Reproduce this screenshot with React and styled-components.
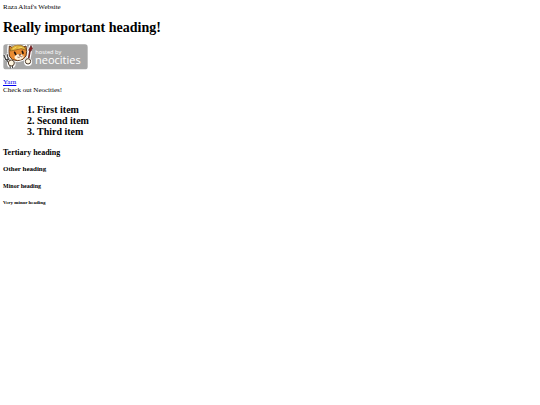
import styled, { createGlobalStyle } from "styled-components";

const GlobalStyle = createGlobalStyle`
body {
margin: 0;
background: #fff;
color: #000;
font-family: "Liberation Serif", "Times New Roman", serif;
font-size: 7px;
line-height: 8px;
}
`
const Page = styled.main`
padding: 3px;
`
const Title = styled.h1`
margin: 9px 0 8px;
font-size: 14px;
line-height: 16px;
`
const BadgeLink = styled.a`
display: block;
width: 85px;
height: 26px;
margin-bottom: 8px;
`
const Badge = styled.svg`
display: block;
width: 100%;
height: 100%;
`
const BadgeText = styled.text`
font-family: "Open Sans", sans-serif;
font-size: 33px;
fill: #fff;
`
const TextLink = styled.a`
color: #0000ee;
text-decoration: underline;
`
const Text = styled.div`
`
const List = styled.ol`
margin: 10px 0 11px;
padding-left: 34px;
font-size: 10px;
font-weight: bold;
line-height: 11px;
`
const Tertiary = styled.h3`
margin: 0 0 8px;
font-size: 8px;
line-height: 9px;
`
const Other = styled.h4`
margin: 0 0 10px;
font-size: 7px;
line-height: 8px;
`
const Minor = styled.h5`
margin: 0 0 11px;
font-size: 6px;
line-height: 6px;
`
const VeryMinor = styled.h6`
margin: 0;
font-size: 5px;
line-height: 6px;
`

const NeocitiesBadge = () => {
    return (
        <Badge viewBox="0 0 255 78" role="img" aria-label="Hosted by Neocities">
            <rect x="1" y="1" width="253" height="75" rx="8" fill="#a7a7a7" />
            {/* fork */}
            <path d="M4 34l6 13 8 4M5 44l6 4M13 31l1 15M11 45l6 13" fill="none" stroke="#fff" strokeWidth="6" strokeLinecap="round" />
            <path d="M3 34l5 12 7 1M13 32l3 15M10 47l9 13" fill="none" stroke="#444" strokeWidth="4" strokeLinecap="round" />
            {/* brush */}
            <path d="M83 8l-5 30-4 16" fill="none" stroke="#fff" strokeWidth="12" strokeLinecap="round" />
            <path d="M84 4l4 9-4 9-7-3z" fill="#8f1d20" stroke="#552222" strokeWidth="2" />
            <path d="M81 20l-5 29" stroke="#6f2927" strokeWidth="5" strokeLinecap="round" />
            {/* head */}
            <path d="M14 20L15 3l13 5Q42-2 57 7l13-5 3 16-1 19-11 12-16 4-18-3-10-12z" fill="#fff" stroke="#fff" strokeWidth="3" strokeLinejoin="round" />
            <path d="M18 22L19 6l12 6 26-1 12-5 2 16-2 14-9 10-16 4-16-3-9-11z" fill="#e98b32" stroke="#59351c" strokeWidth="3" strokeLinejoin="round" />
            <path d="M34 38l9-7 11-1 8 6-1 6-8 5-10 1-7-4z" fill="#fff2dc" />
            <path d="M22 21Q24 4 44 3q21 0 26 16L54 14l-16 4z" fill="#dfb23b" stroke="#80571f" strokeWidth="2" />
            <path d="M30 15l10-6M46 12l12-2" stroke="#f6d86b" strokeWidth="3" />
            <path d="M35 25l3 6M58 22l2 6" stroke="#23150f" strokeWidth="5" strokeLinecap="round" />
            <path d="M47 32l7-1-3 4z" fill="#4d211a" stroke="#4d211a" />
            <path d="M43 39q6 4 9-2 4 3 7-1" fill="none" stroke="#6c3320" strokeWidth="2" />
            {/* paws */}
            <circle cx="25" cy="60" r="13" fill="#fff" />
            <circle cx="25" cy="57" r="9" fill="#fff5df" stroke="#4d3a2b" strokeWidth="3" />
            <path d="M21 66l1 7M28 66l1 6" stroke="#333" strokeWidth="3" />
            <circle cx="75" cy="54" r="12" fill="#fff" />
            <circle cx="75" cy="52" r="8" fill="#fff5df" stroke="#4d3a2b" strokeWidth="3" />
            <BadgeText x="96" y="61">
                <tspan x="97" y="29" fontSize="17">hosted by</tspan>
                <tspan x="96" y="61">neocities</tspan>
            </BadgeText>
        </Badge>
    )
}

const App = () => {
    return (
        <>
            <GlobalStyle />
            <Page>
                <Text>Raza Altaf's Website</Text>
                <Title>Really important heading!</Title>
                <BadgeLink href="#neocities">
                    <NeocitiesBadge />
                </BadgeLink>
                <TextLink href="#yarn">Yarn</TextLink>
                <Text>Check out Neocities!</Text>
                <List>
                    <li>First item</li>
                    <li>Second item</li>
                    <li>Third item</li>
                </List>
                <Tertiary>Tertiary heading</Tertiary>
                <Other>Other heading</Other>
                <Minor>Minor heading</Minor>
                <VeryMinor>Very minor heading</VeryMinor>
            </Page>
        </>
    )
}
export default App;
